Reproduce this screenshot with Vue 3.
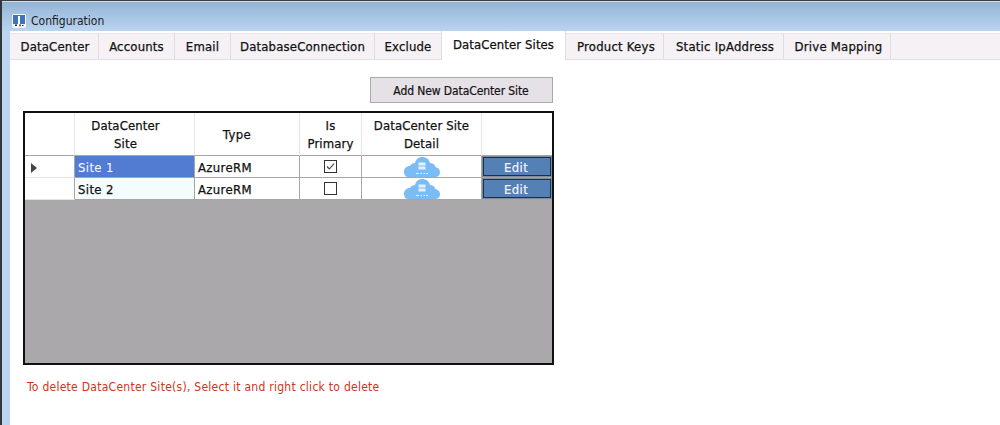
<script setup>
const tabs = [
  { label: 'DataCenter', w: 87 },
  { label: 'Accounts', w: 76 },
  { label: 'Email', w: 56 },
  { label: 'DatabaseConnection', w: 144 },
  { label: 'Exclude', w: 67 },
  { label: 'DataCenter Sites', w: 125, active: true },
  { label: 'Product Keys', w: 98 },
  { label: 'Static IpAddress', w: 120 },
  { label: 'Drive Mapping', w: 107 }
]
const rows = [
  { site: 'Site 1', type: 'AzureRM', primary: true, current: true },
  { site: 'Site 2', type: 'AzureRM', primary: false, current: false }
]
</script>

<template>
  <div class="window">
    <div class="titlebar">
      <svg class="appicon" width="14" height="14" viewBox="0 0 14 14">
        <rect width="14" height="14" rx="2" fill="#f4f7fb" />
        <rect x="1" y="1" width="12" height="9" fill="#3f74b8" />
        <rect x="6" y="2" width="2" height="8" fill="#fff" />
        <path d="M3 10.5h2v1.5H3zM7 10.5h2l-1 2.5zM10 11h1.500v1H10z" fill="#222" />
      </svg>
      <span class="title">Configuration</span>
    </div>
    <div class="client">
      <div class="tabstrip">
        <div
          v-for="t in tabs"
          :key="t.label"
          class="tab"
          :class="{ active: t.active }"
          :style="{ width: t.w + 'px' }"
        >{{ t.label }}</div>
      </div>
      <div class="panel">
        <div class="toolbar">
          <button class="addbtn">Add New DataCenter Site</button>
        </div>
        <div class="grid">
          <div class="row head">
            <div class="cell rh"></div>
            <div class="cell c1">DataCenter<br />Site</div>
            <div class="cell c2">Type</div>
            <div class="cell c3">Is<br />Primary</div>
            <div class="cell c4">DataCenter Site<br />Detail</div>
            <div class="cell c5"></div>
          </div>
          <div v-for="r in rows" :key="r.site" class="row data">
            <div class="cell rh">
              <span v-if="r.current" class="arrow"></span>
            </div>
            <div class="cell c1 left" :class="r.current ? 'selected' : 'alt'">{{ r.site }}</div>
            <div class="cell c2 left">{{ r.type }}</div>
            <div class="cell c3 nopad">
              <svg width="13" height="13" viewBox="0 0 13 13">
                <rect x="0.5" y="0.5" width="12" height="12" fill="#fff" stroke="#333" />
                <path v-if="r.primary" d="M3 6.500 5.400 9 10 3.600" fill="none" stroke="#444" stroke-width="1.100" />
              </svg>
            </div>
            <div class="cell c4 nopad">
              <svg class="cloud" width="36" height="20" viewBox="0 0 36 20">
                <path d="M4 20C1 20 0 17 0 14.500 0 11 3 9 6 9 7 7 9 6 11 6 12 2 15 0 18 0 22 0 25 2 26 6 29 6 31 8 31.500 10 34 10.500 36 12.500 36 15 36 18 34 20 31 20Z" fill="#7cbcf4" />
                <path d="M14.500 5.500h7v3h-7zM14.500 9.500h7v3h-7z" fill="#e4f1fc" />
                <path d="M12 16.500h3M16.500 16.500h1.500M19.500 16.500h1.500M22 16.500h2" stroke="#e4f1fc" stroke-width="1.200" />
              </svg>
            </div>
            <div class="cell c5 btncell">
              <button class="edit">Edit</button>
            </div>
          </div>
          <div class="empty"></div>
        </div>
        <p class="hint">To delete DataCenter Site(s), Select it and right click to delete</p>
      </div>
    </div>
  </div>
</template>

<style>
html, body { margin: 0; padding: 0; background: #fff; overflow: hidden; }
</style>

<style scoped>
.window {
  width: 1000px;
  height: 425px;
  box-sizing: border-box;
  overflow: hidden;
  display: flex;
  flex-direction: column;
  border-top: 1px solid #3a3f44;
  border-left: 2px solid #33373b;
  background: #bcd5f0;
  font-family: "DejaVu Sans Condensed", "Noto Sans", sans-serif;
  color: #111;
}
.titlebar {
  height: 30px;
  box-sizing: border-box;
  padding: 8px 0 0 10px;
  flex: none;
  display: flex;
  align-items: center;
  gap: 5px;
  border-top: 1px solid #d5dbe2;
  background: linear-gradient(#94b4d5, #bad4f0);
}
.appicon { flex: none; }
.title { font-size: 12px; color: #1c1c1c; }
.client {
  flex: 1;
  margin-left: 8px;
  background: #fff;
  display: flex;
  flex-direction: column;
}
.tabstrip {
  margin-top: 2px;
  height: 27px;
  display: flex;
  padding-left: 2px;
  background: #f5f1f5;
  border-bottom: 1px solid #e3dfe3;
  box-sizing: border-box;
  box-shadow: inset 0 1px 0 #e9e5e9;
}
.tab {
  box-sizing: border-box;
  height: 26px;
  border-right: 1px solid #e0dce0;
  display: flex;
  align-items: center;
  justify-content: center;
  font-size: 13px;
  letter-spacing: 0.17px;
  -webkit-text-stroke: 0.25px #111;
  white-space: nowrap;
}
.tab.active {
  height: 29px;
  margin-top: -2px;
  margin-left: -1px;
  background: #fff;
  padding-bottom: 2px;
  letter-spacing: 0.1px;
  position: relative;
  z-index: 1;
  border-left: 1px solid #e0dce0;
  border-right: 1px solid #e0dce0;
}
.tab.active ~ .tab { padding-left: 3px; letter-spacing: 0.22px; }
.panel { padding: 17px 0 0 13px; }
.toolbar {
  width: 531px;
  display: flex;
  justify-content: flex-end;
  padding-right: 1px;
  box-sizing: border-box;
}
.addbtn {
  width: 183px;
  height: 26px;
  padding: 2px 1px 0 0;
  background: #e6e1e6;
  border: 1px solid #a9a9a9;
  font: 12px "DejaVu Sans Condensed", "Noto Sans", sans-serif;
  letter-spacing: -0.1px;
  -webkit-text-stroke: 0.2px #111;
  color: #111;
}
.grid {
  margin-top: 8px;
  width: 531px;
  height: 254px;
  box-sizing: border-box;
  border: 2px solid #111;
  display: flex;
  flex-direction: column;
  background: #aaa8aa;
}
.row { display: flex; background: #fff; flex: none; }
.row.head { height: 43px; }
.row.data { height: 22px; }
.cell {
  box-sizing: border-box;
  display: flex;
  align-items: center;
  justify-content: center;
  text-align: center;
  font-size: 13px;
  line-height: 18px;
  letter-spacing: 0.35px;
  padding-top: 2px;
  border-right: 1px solid #a6a6a6;
  border-bottom: 1px solid #a6a6a6;
  -webkit-text-stroke: 0.25px #111;
}
.cell.nopad { padding-top: 0; }
.head .cell { border-right-color: #e6e6e6; border-bottom-color: #a6a6a6; padding-top: 2px; letter-spacing: 0.12px; }
.head .c1 { padding-right: 18px; }
.head .c2 { padding-right: 20px; letter-spacing: 0.4px; }
.rh { width: 50px; }
.data .rh { border-right-color: #a6a6a6; border-bottom-color: #e6e6e6; }
.c1 { width: 120px; }
.c2 { width: 105px; }
.c3 { width: 62px; }
.c4 { width: 120px; }
.c5 { width: 70px; border-right: 0; }
.left { justify-content: flex-start; padding-left: 3px; }
.selected { background: #527bd2; color: #f2f6ff; -webkit-text-stroke: 0.1px #f2f6ff; }
.alt { background: #f4fdfd; }
.arrow {
  width: 0;
  height: 0;
  margin-left: -31px;
  border-left: 6px solid #444;
  border-top: 5px solid transparent;
  border-bottom: 5px solid transparent;
}
.cloud { margin-top: 1px; }
.btncell { padding: 0; align-items: stretch; border-bottom-color: #a6a6a6; }
.edit {
  flex: 1;
  padding: 1px 2px 0 0;
  background: #5480b6;
  border: 2px solid #17304e;
  outline: 1px solid #7d8b9b;
  outline-offset: -1px;
  color: #f2f5f9;
  font: 13px "DejaVu Sans Condensed", "Noto Sans", sans-serif;
  letter-spacing: 0.4px;
  -webkit-text-stroke: 0.2px #f2f5f9;
}
.empty { flex: 1; }
.hint {
  margin: 15px 0 0 4px;
  font-size: 12px;
  color: #cf3320;
  letter-spacing: 0.27px;
}
</style>
